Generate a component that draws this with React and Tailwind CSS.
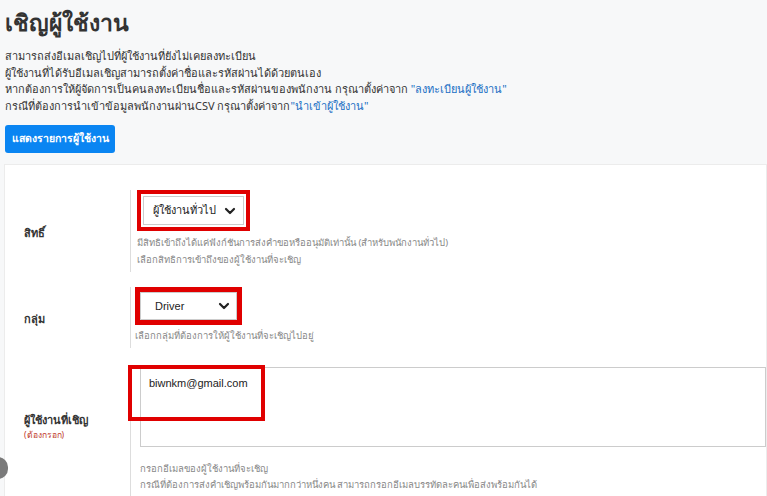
import React from "react";

const Chevron = () => (
  <svg width="12" height="12" viewBox="0 0 12 12" className="shrink-0">
    <path d="M2 4 L6 8 L10 4" fill="none" stroke="#222" strokeWidth="2.2" strokeLinecap="round" strokeLinejoin="round" />
  </svg>
);

export default function App() {
  return (
    <div
      className="w-[767px] h-[496px] overflow-hidden bg-[#f7f8f9] text-[#333] relative"
      style={{ fontFamily: '"Noto Sans", "Open Sans", Tahoma, sans-serif' }}
    >
      <div className="pl-[5px] pt-[4px]">
        <h1 className="text-[23px] leading-[36px] font-semibold text-[#333]">เชิญผู้ใช้งาน</h1>
        <div className="mt-[8px] text-[11px] leading-[16.5px] text-[#333]">
          <p>สามารถส่งอีเมลเชิญไปที่ผู้ใช้งานที่ยังไม่เคยลงทะเบียน</p>
          <p>ผู้ใช้งานที่ได้รับอีเมลเชิญสามารถตั้งค่าชื่อและรหัสผ่านได้ด้วยตนเอง</p>
          <p>
            หากต้องการให้ผู้จัดการเป็นคนลงทะเบียนชื่อและรหัสผ่านของพนักงาน กรุณาตั้งค่าจาก{" "}
            <span className="text-[#1a6fc4]">"ลงทะเบียนผู้ใช้งาน"</span>
          </p>
          <p>
            กรณีที่ต้องการนำเข้าข้อมูลพนักงานผ่านCSV กรุณาตั้งค่าจาก
            <span className="text-[#1a6fc4]">"นำเข้าผู้ใช้งาน"</span>
          </p>
        </div>
        <button className="mt-[11px] w-[110px] h-[28px] rounded-[3px] bg-[#0a85f2] text-white text-[10.5px] font-bold">
          แสดงรายการผู้ใช้งาน
        </button>
      </div>

      <div className="ml-[4px] mt-[11px] bg-white border border-[#ececec] pt-[25px]">
        {/* Row 1 */}
        <div className="flex">
          <div className="w-[125px] pl-[19px] flex items-center text-[11px] font-bold text-[#333] pt-[4px]">สิทธิ์</div>
          <div className="border-l border-[#ddd] pl-[6px] pb-[4px]">
            <div className="w-[113px] border-4 border-[#e00000] p-[2px]">
              <div className="h-[29px] border border-[#ccc] flex items-center justify-between pl-[9px] pr-[7px] text-[11px] text-[#222]">
                <span>ผู้ใช้งานทั่วไป</span>
                <Chevron />
              </div>
            </div>
            <div className="mt-[3px] text-[9.5px] leading-[17px] text-[#888]">
              <p>มีสิทธิเข้าถึงได้แค่ฟังก์ชันการส่งคำขอหรืออนุมัติเท่านั้น (สำหรับพนักงานทั่วไป)</p>
              <p>เลือกสิทธิการเข้าถึงของผู้ใช้งานที่จะเชิญ</p>
            </div>
          </div>
        </div>

        {/* Row 2 */}
        <div className="flex mt-[15px]">
          <div className="w-[125px] pl-[19px] flex items-center text-[11px] font-bold text-[#333] pt-[4px]">กลุ่ม</div>
          <div className="border-l border-[#ddd] pl-[4px] pb-[4px]">
            <div className="w-[107px] border-[5px] border-[#e00000]">
              <div className="h-[28px] border border-[#ccc] flex items-center justify-between pl-[14px] pr-[6px] text-[11px] text-[#222]" style={{ fontFamily: '"Liberation Sans", Arial, sans-serif' }}>
                <span>Driver</span>
                <Chevron />
              </div>
            </div>
            <div className="mt-[2px] text-[9.5px] leading-[17px] text-[#888]">
              <p>เลือกกลุ่มที่ต้องการให้ผู้ใช้งานที่จะเชิญไปอยู่</p>
            </div>
          </div>
        </div>

        {/* Row 3 */}
        <div className="flex mt-[17px]">
          <div className="w-[125px] pl-[19px] flex flex-col pt-[46px]">
            <div className="text-[11px] font-bold text-[#333] leading-[17px]">ผู้ใช้งานที่เชิญ</div>
            <div className="text-[8.5px] text-[#c0392b] leading-[14px]">(ต้องกรอก)</div>
          </div>
          <div className="flex-1 border-l border-[#ddd] pl-[9px] pt-[2px] relative">
            <div className="h-[80px] border border-[#ccc] pl-[8px] pt-[7px] text-[11px] text-[#222]" style={{ fontFamily: '"Liberation Sans", Arial, sans-serif' }}>
              biwnkm@gmail.com
            </div>
            <div className="absolute left-[-3px] top-0 w-[137px] h-[56px] border-4 border-[#e00000]"></div>
            <div className="mt-[14px] text-[9.5px] leading-[16px] text-[#888] pb-[10px]">
              <p>กรอกอีเมลของผู้ใช้งานที่จะเชิญ</p>
              <p>กรณีที่ต้องการส่งคำเชิญพร้อมกันมากกว่าหนึ่งคน สามารถกรอกอีเมลบรรทัดละคนเพื่อส่งพร้อมกันได้</p>
            </div>
          </div>
        </div>
      </div>

      <div className="absolute left-[-12px] top-[457px] w-[20px] h-[22px] rounded-full bg-[#7a7a7a]"></div>
    </div>
  );
}
